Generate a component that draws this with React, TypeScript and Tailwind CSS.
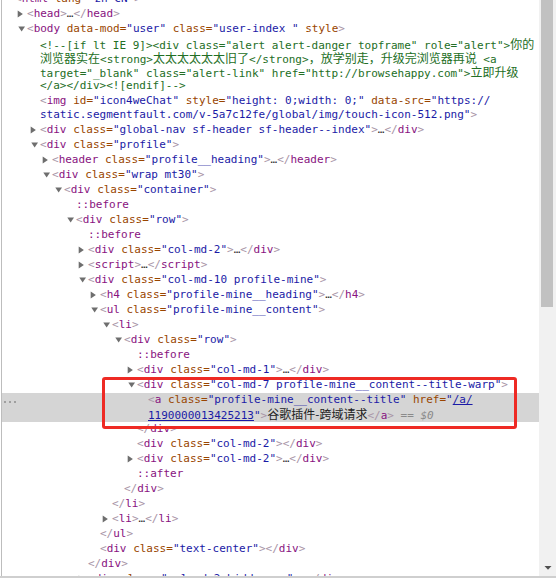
import React from "react";

const PUNCT = "text-[#a894a6]";
const TAG = "text-[#881280]";
const ATTR = "text-[#994500]";
const VAL = "text-[#1a1aa6]";

const PL = [
  "pl-[1px]",
  "pl-[13px]",
  "pl-[26px]",
  "pl-[38px]",
  "pl-[50px]",
  "pl-[62px]",
  "pl-[74px]",
  "pl-[86px]",
  "pl-[98px]",
  "pl-[110px]",
  "pl-[123px]",
  "pl-[134px]",
];

function Cjk({ children }: { children: React.ReactNode }) {
  return (
    <span className="font-['Noto_Sans_CJK_SC',sans-serif] text-[12px]">
      {children}
    </span>
  );
}

type Attr = [string, string?];

function Attrs({ attrs }: { attrs: Attr[] }) {
  return (
    <>
      {attrs.map(([n, v], i) => (
        <React.Fragment key={i}>
          {" "}
          <span className={ATTR}>{n}</span>
          {v !== undefined && (
            <>
              <span className={ATTR}>=</span>
              <span className={VAL}>"{v}"</span>
            </>
          )}
        </React.Fragment>
      ))}
    </>
  );
}

function Close({ tag }: { tag: string }) {
  return (
    <>
      <span className={PUNCT}>&lt;/</span>
      <span className={TAG}>{tag}</span>
      <span className={PUNCT}>&gt;</span>
    </>
  );
}

function Open({
  tag,
  attrs = [],
  collapsed,
  empty,
  bare,
}: {
  tag: string;
  attrs?: Attr[];
  collapsed?: boolean;
  empty?: boolean;
  bare?: boolean;
}) {
  return (
    <>
      <span className={PUNCT}>&lt;</span>
      <span className={TAG}>{tag}</span>
      <Attrs attrs={attrs} />
      {bare ? null : <span className={PUNCT}>&gt;</span>}
      {collapsed && (
        <>
          <span className="text-[#303030]">…</span>
          <Close tag={tag} />
        </>
      )}
      {empty && <Close tag={tag} />}
    </>
  );
}

function Pseudo({ name }: { name: string }) {
  return <span className={TAG}>{name}</span>;
}

function Tri({ dir }: { dir?: "r" | "d" }) {
  return (
    <svg width="12" height="14" viewBox="0 0 12 14" className="shrink-0">
      {dir === "r" && (
        <polygon points="2.7,3.5 7.9,7 2.7,10.5" fill="#6e6e6e" />
      )}
      {dir === "d" && (
        <polygon points="3.3,4.5 10,4.5 6.65,9.5" fill="#6e6e6e" />
      )}
    </svg>
  );
}

type Item = {
  lvl: number;
  tog?: "r" | "d";
  lines: React.ReactNode[];
  sel?: boolean;
};

const items: Item[] = [
  { lvl: -1, lines: [<Open tag="html" attrs={[["lang", "zh-CN"]]} />] },
  { lvl: 0, tog: "r", lines: [<Open tag="head" collapsed />] },
  {
    lvl: 0,
    tog: "d",
    lines: [
      <Open
        tag="body"
        attrs={[["data-mod", "user"], ["class", "user-index "], ["style"]]}
      />,
    ],
  },
  {
    lvl: 1,
    lines: [
      <span className="text-[#236e25]">
        {'<!--[if lt IE 9]><div class="alert alert-danger topframe" role="alert">'}
        <Cjk>你的</Cjk>
      </span>,
      <span className="text-[#236e25]">
        <Cjk>浏览器实在</Cjk>
        {"<strong>"}
        <Cjk>太太太太太太旧了</Cjk>
        {"</strong>"}
        <Cjk>，放学别走，升级完浏览器再说</Cjk>
        {" <a"}
      </span>,
      <span className="text-[#236e25]">
        {'target="_blank" class="alert-link" href="http://browsehappy.com">'}
        <Cjk>立即升级</Cjk>
      </span>,
      <span className="text-[#236e25]">{"</a></div><![endif]-->"}</span>,
    ],
  },
  {
    lvl: 1,
    lines: [
      <>
        <span className={PUNCT}>&lt;</span>
        <span className={TAG}>img</span>
        <Attrs
          attrs={[
            ["id", "icon4weChat"],
            ["style", "height: 0;width: 0;"],
          ]}
        />{" "}
        <span className={ATTR}>data-src=</span>
        <span className={VAL}>"https://</span>
      </>,
      <>
        <span className={VAL}>
          static.segmentfault.com/v-5a7c12fe/global/img/touch-icon-512.png"
        </span>
        <span className={PUNCT}>&gt;</span>
      </>,
    ],
  },
  {
    lvl: 1,
    tog: "r",
    lines: [
      <Open
        tag="div"
        attrs={[["class", "global-nav sf-header sf-header--index"]]}
        collapsed
      />,
    ],
  },
  { lvl: 1, tog: "d", lines: [<Open tag="div" attrs={[["class", "profile"]]} />] },
  {
    lvl: 2,
    tog: "r",
    lines: [<Open tag="header" attrs={[["class", "profile__heading"]]} collapsed />],
  },
  { lvl: 2, tog: "d", lines: [<Open tag="div" attrs={[["class", "wrap mt30"]]} />] },
  { lvl: 3, tog: "d", lines: [<Open tag="div" attrs={[["class", "container"]]} />] },
  { lvl: 4, lines: [<Pseudo name="::before" />] },
  { lvl: 4, tog: "d", lines: [<Open tag="div" attrs={[["class", "row"]]} />] },
  { lvl: 5, lines: [<Pseudo name="::before" />] },
  {
    lvl: 5,
    tog: "r",
    lines: [<Open tag="div" attrs={[["class", "col-md-2"]]} collapsed />],
  },
  { lvl: 5, tog: "r", lines: [<Open tag="script" collapsed />] },
  {
    lvl: 5,
    tog: "d",
    lines: [<Open tag="div" attrs={[["class", "col-md-10 profile-mine"]]} />],
  },
  {
    lvl: 6,
    tog: "r",
    lines: [<Open tag="h4" attrs={[["class", "profile-mine__heading"]]} collapsed />],
  },
  {
    lvl: 6,
    tog: "d",
    lines: [<Open tag="ul" attrs={[["class", "profile-mine__content"]]} />],
  },
  { lvl: 7, tog: "d", lines: [<Open tag="li" />] },
  { lvl: 8, tog: "d", lines: [<Open tag="div" attrs={[["class", "row"]]} />] },
  { lvl: 9, lines: [<Pseudo name="::before" />] },
  {
    lvl: 9,
    tog: "r",
    lines: [<Open tag="div" attrs={[["class", "col-md-1"]]} collapsed />],
  },
  {
    lvl: 9,
    tog: "d",
    lines: [
      <Open
        tag="div"
        attrs={[["class", "col-md-7 profile-mine__content--title-warp"]]}
      />,
    ],
  },
  {
    lvl: 10,
    sel: true,
    lines: [
      <>
        <span className={PUNCT}>&lt;</span>
        <span className={TAG}>a</span>
        <Attrs attrs={[["class", "profile-mine__content--title"]]} />{" "}
        <span className={ATTR}>href=</span>
        <span className={VAL}>"</span>
        <span className={`${VAL} underline`}>/a/</span>
      </>,
      <>
        <span className={`${VAL} underline`}>1190000013425213</span>
        <span className={VAL}>"</span>
        <span className={PUNCT}>&gt;</span>
        <span className="text-[#222]">
          <Cjk>谷歌插件-跨域请求</Cjk>
        </span>
        <Close tag="a" />
        <span className="text-[#8a8a8a] italic"> == $0</span>
      </>,
    ],
  },
  { lvl: 9, lines: [<Close tag="div" />] },
  { lvl: 9, lines: [<Open tag="div" attrs={[["class", "col-md-2"]]} empty />] },
  {
    lvl: 9,
    tog: "r",
    lines: [<Open tag="div" attrs={[["class", "col-md-2"]]} collapsed />],
  },
  { lvl: 9, lines: [<Pseudo name="::after" />] },
  { lvl: 8, lines: [<Close tag="div" />] },
  { lvl: 7, lines: [<Close tag="li" />] },
  { lvl: 7, tog: "r", lines: [<Open tag="li" collapsed />] },
  { lvl: 6, lines: [<Close tag="ul" />] },
  { lvl: 6, lines: [<Open tag="div" attrs={[["class", "text-center"]]} empty />] },
  { lvl: 5, lines: [<Close tag="div" />] },
  {
    lvl: 5,
    tog: "r",
    lines: [
      <Open tag="div" attrs={[["class", "col-md-2 hidden-xs"]]} collapsed />,
    ],
  },
];

function Row({ item }: { item: Item }) {
  return (
    <div
      className={`relative pb-[1px] ${PL[item.lvl + 1]} ${
        item.sel ? "bg-[#d5d5d5]" : ""
      }`}
    >
      {item.sel && (
        <div className="absolute left-[2px] top-[8px] flex gap-[3px]">
          <div className="w-[2px] h-[2px] rounded-full bg-[#8c8c8c]" />
          <div className="w-[2px] h-[2px] rounded-full bg-[#8c8c8c]" />
          <div className="w-[2px] h-[2px] rounded-full bg-[#8c8c8c]" />
        </div>
      )}
      <div className="flex">
        <Tri dir={item.tog} />
        <div>
          {item.lines.map((l, i) => (
            <div key={i} className="h-[14px] leading-[14px] whitespace-pre">
              {l}
            </div>
          ))}
        </div>
      </div>
    </div>
  );
}

export default function App() {
  return (
    <div className="w-[556px] h-[578px] bg-white overflow-hidden flex flex-col border-b-2 border-[#cfcfcf] font-['DejaVu_Sans_Mono',monospace] text-[11px] text-[#222]">
      <div className="flex flex-1 min-h-0">
        <div className="flex-1 pl-[1px] overflow-hidden">
          <div className="relative h-full border-l border-[#bdbdbd] overflow-hidden">
            <div className="-mt-[8px]">
              {items.map((it, i) => (
                <Row key={i} item={it} />
              ))}
            </div>
            <div className="absolute left-[100px] top-[377px] w-[415px] h-[52px] border-[3px] border-[#ee2a24] rounded-[3px]" />
          </div>
        </div>
        <div className="w-[17px] bg-[#f1f1f1] flex flex-col">
          <div className="h-[307px] ml-[2px] w-[12px] bg-[#c1c1c1]" />
          <div className="flex-1" />
          <div className="h-[17px] flex items-center justify-center">
            <svg width="8" height="4" viewBox="0 0 8 4">
              <polygon points="0.5,0 7.5,0 4,3.8" fill="#505050" />
            </svg>
          </div>
        </div>
      </div>
    </div>
  );
}
